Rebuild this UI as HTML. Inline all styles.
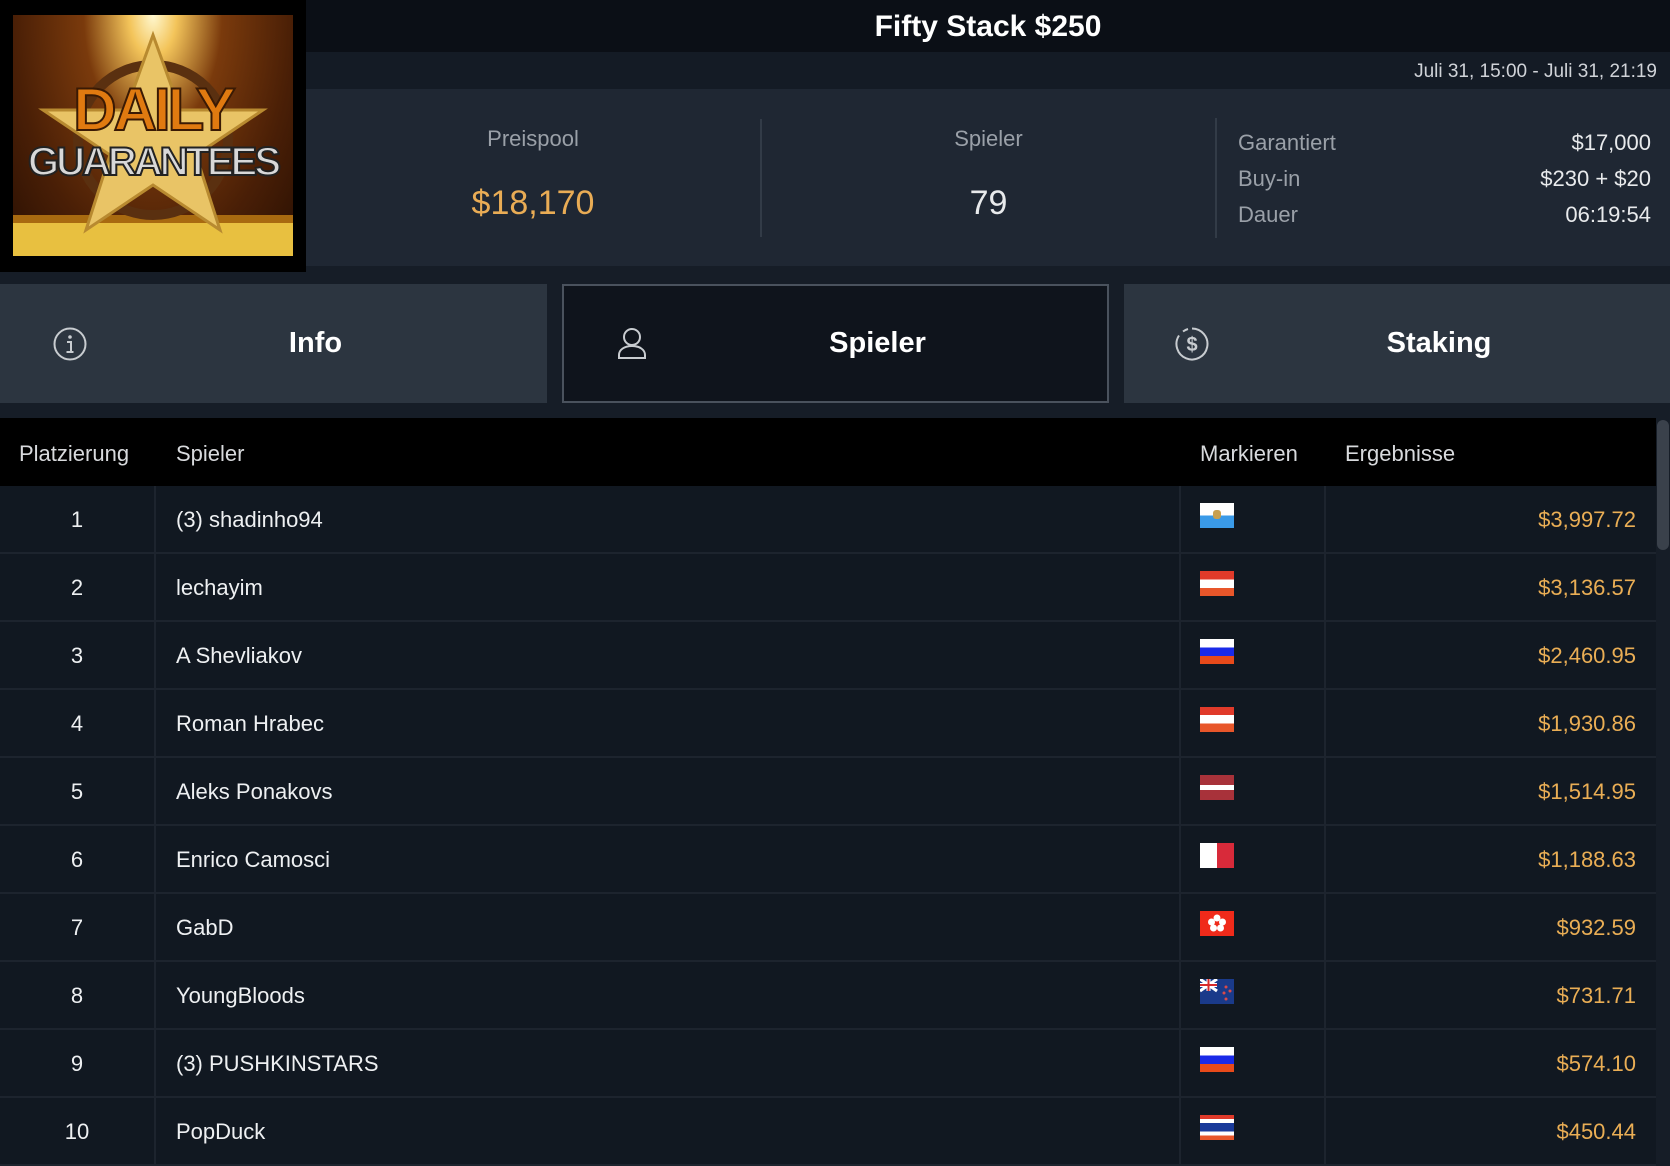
<!DOCTYPE html>
<html><head><meta charset="utf-8">
<style>
*{margin:0;padding:0;box-sizing:border-box}
body{width:1670px;height:1160px;overflow:hidden;background:#161d27;font-family:"Liberation Sans",sans-serif;color:#fff;position:relative}
.abs{position:absolute}
.title{left:306px;top:0;width:1364px;height:52px;background:#0b0f16;text-align:center;font-size:30px;line-height:54px;color:#fff;font-weight:bold}
.tbar{left:0;top:0;width:1670px;height:52px;background:#0b0f16}
.date{left:0;top:52px;width:1670px;height:37px;background:#141b25;text-align:right;padding-right:13px;font-size:19px;line-height:40px;color:#d0d3d8}
.stats{left:0;top:89px;width:1670px;height:177px;background:#1f2733}
.logo{left:0;top:0;width:306px;height:272px;background:#000}
.logoimg{left:13px;top:15px;width:280px;height:241px;overflow:hidden;background:radial-gradient(ellipse at 50% 0%,#fff8d0 0%,#f3c45a 12%,#7a3a0c 35%,#4a1f06 70%,#2a1003 100%)}
.lbl{color:#9aa0a8;font-size:22px}
.tab{top:284px;height:119px;background:#2c3540;font-size:29px;line-height:119px;text-align:center;font-weight:bold;padding-left:84px}
.thead{left:0;top:418px;width:1656px;height:68px;background:#000;font-size:22px;color:#d8dadd}
.row{left:0;width:1656px;height:68px;background:#111821;border-bottom:2px solid #1d242e;font-size:22px;color:#eef0f2}
.row .vl{position:absolute;top:0;width:2px;height:68px;background:#1d242e}
.money{color:#eaae55;position:absolute;right:20px;top:0;line-height:68px}
.flag{position:absolute;left:1200px;top:17px;width:34px;height:25px;overflow:hidden}
</style></head><body>
<div class="abs tbar"></div>
<div class="abs title">Fifty Stack $250</div>
<div class="abs date">Juli 31, 15:00 - Juli 31, 21:19</div>
<div class="abs stats">
  <div class="abs" style="left:306px;top:30px;width:454px;text-align:center"><div class="lbl" style="line-height:40px">Preispool</div><div style="color:#e9ac55;font-size:34px;line-height:68px;margin-top:10px">$18,170</div></div>
  <div class="abs" style="left:760px;top:30px;width:2px;height:118px;background:#323b47"></div>
  <div class="abs" style="left:762px;top:30px;width:453px;text-align:center"><div class="lbl" style="line-height:40px">Spieler</div><div style="color:#e8eaec;font-size:34px;line-height:68px;margin-top:10px">79</div></div>
  <div class="abs" style="left:1215px;top:29px;width:2px;height:120px;background:#323b47"></div>
  <div class="abs lbl" style="left:1238px;top:36px;line-height:36px">Garantiert<br>Buy-in<br>Dauer</div>
  <div class="abs" style="right:19px;top:36px;line-height:36px;text-align:right;font-size:22px;color:#e8eaec">$17,000<br>$230 + $20<br>06:19:54</div>
</div>
<div class="abs logo"><div class="abs logoimg">
  <svg width="280" height="241" viewBox="0 0 280 241" class="abs" style="left:0;top:0">
    <rect x="0" y="205" width="280" height="36" fill="#e8c040"/>
    <rect x="0" y="200" width="280" height="8" fill="#a86a10"/>
    <circle cx="140" cy="125" r="75" fill="none" stroke="#5a3010" stroke-width="10"/>
    <polygon points="140,20 167,95 250,95 183,140 207,215 140,170 73,215 97,140 30,95 113,95" fill="#e9c466" stroke="#b88a30" stroke-width="3"/>
  </svg>
  <div class="abs" style="left:0;width:280px;top:60px;text-align:center;font-size:60px;font-weight:bold;color:#e07a10;-webkit-text-stroke:2px #3a1a04;letter-spacing:-3px">DAILY</div>
  <div class="abs" style="left:0;width:280px;top:125px;text-align:center;font-size:40px;font-weight:bold;color:#d8d8d8;-webkit-text-stroke:2px #222;letter-spacing:-3px">GUARANTEES</div>
</div></div>

<div class="abs tab" style="left:0;width:547px">Info
  <svg class="abs" style="left:52px;top:42px" width="36" height="36" viewBox="0 0 36 36"><circle cx="18" cy="18" r="15.5" fill="none" stroke="#c8ccd0" stroke-width="2"/><circle cx="18" cy="11" r="1.8" fill="#c8ccd0"/><path d="M15 16h4v10M14.5 26h7" fill="none" stroke="#c8ccd0" stroke-width="2"/></svg>
</div>
<div class="abs tab" style="left:562px;width:547px;background:#0f141c;border:2px solid #4a525d;line-height:115px">Spieler
  <svg class="abs" style="left:52px;top:40px" width="32" height="36" viewBox="0 0 32 36"><circle cx="16" cy="11" r="8" fill="none" stroke="#c8ccd0" stroke-width="2"/><path d="M3 32v-3c0-5 5-9 13-9s13 4 13 9v3z" fill="none" stroke="#c8ccd0" stroke-width="2"/></svg>
</div>
<div class="abs tab" style="left:1124px;width:546px">Staking
  <svg class="abs" style="left:50px;top:42px" width="36" height="36" viewBox="0 0 36 36"><path d="M18 2.5A15.5 15.5 0 1 1 5 9.5" fill="none" stroke="#c8ccd0" stroke-width="2"/><path d="M9 5.5A15.5 15.5 0 0 1 14 3" fill="none" stroke="#c8ccd0" stroke-width="2"/><text x="18" y="25" text-anchor="middle" font-family="Liberation Sans" font-size="20" font-weight="bold" fill="#c8ccd0">$</text></svg>
</div>

<div class="abs" style="left:1656px;top:418px;width:14px;height:742px;background:#161d27"><div style="margin:2px 1px;height:130px;background:#3a414b;border-radius:6px"></div></div>
<div class="abs thead">
  <span class="abs" style="left:19px;line-height:72px">Platzierung</span>
  <span class="abs" style="left:176px;line-height:72px">Spieler</span>
  <span class="abs" style="left:1200px;line-height:72px">Markieren</span>
  <span class="abs" style="left:1345px;line-height:72px">Ergebnisse</span>
</div>

<div class="abs row" style="top:486px"><div class="vl" style="left:154px"></div><div class="vl" style="left:1179px"></div><div class="vl" style="left:1324px"></div><span class="abs" style="left:0;width:154px;text-align:center;line-height:68px">1</span><span class="abs" style="left:176px;line-height:68px">(3) shadinho94</span><div class="flag" style="background:linear-gradient(#fff 50%,#3a9ae8 50%)"><div style="position:absolute;left:13px;top:7px;width:8px;height:9px;background:#c8a050;border-radius:3px"></div></div><span class="money">$3,997.72</span></div>
<div class="abs row" style="top:554px"><div class="vl" style="left:154px"></div><div class="vl" style="left:1179px"></div><div class="vl" style="left:1324px"></div><span class="abs" style="left:0;width:154px;text-align:center;line-height:68px">2</span><span class="abs" style="left:176px;line-height:68px">lechayim</span><div class="flag" style="background:linear-gradient(#e03a2a 33%,#fff 33%,#fff 67%,#e8562a 67%)"></div><span class="money">$3,136.57</span></div>
<div class="abs row" style="top:622px"><div class="vl" style="left:154px"></div><div class="vl" style="left:1179px"></div><div class="vl" style="left:1324px"></div><span class="abs" style="left:0;width:154px;text-align:center;line-height:68px">3</span><span class="abs" style="left:176px;line-height:68px">A Shevliakov</span><div class="flag" style="background:linear-gradient(#fff 33%,#1a2ae8 33%,#1a2ae8 67%,#e84a1a 67%)"></div><span class="money">$2,460.95</span></div>
<div class="abs row" style="top:690px"><div class="vl" style="left:154px"></div><div class="vl" style="left:1179px"></div><div class="vl" style="left:1324px"></div><span class="abs" style="left:0;width:154px;text-align:center;line-height:68px">4</span><span class="abs" style="left:176px;line-height:68px">Roman Hrabec</span><div class="flag" style="background:linear-gradient(#e03a2a 33%,#fff 33%,#fff 67%,#e8562a 67%)"></div><span class="money">$1,930.86</span></div>
<div class="abs row" style="top:758px"><div class="vl" style="left:154px"></div><div class="vl" style="left:1179px"></div><div class="vl" style="left:1324px"></div><span class="abs" style="left:0;width:154px;text-align:center;line-height:68px">5</span><span class="abs" style="left:176px;line-height:68px">Aleks Ponakovs</span><div class="flag" style="background:linear-gradient(#a8323a 40%,#fff 40%,#fff 60%,#a8323a 60%)"></div><span class="money">$1,514.95</span></div>
<div class="abs row" style="top:826px"><div class="vl" style="left:154px"></div><div class="vl" style="left:1179px"></div><div class="vl" style="left:1324px"></div><span class="abs" style="left:0;width:154px;text-align:center;line-height:68px">6</span><span class="abs" style="left:176px;line-height:68px">Enrico Camosci</span><div class="flag" style="background:linear-gradient(90deg,#fff 50%,#d82a3a 50%)"></div><span class="money">$1,188.63</span></div>
<div class="abs row" style="top:894px"><div class="vl" style="left:154px"></div><div class="vl" style="left:1179px"></div><div class="vl" style="left:1324px"></div><span class="abs" style="left:0;width:154px;text-align:center;line-height:68px">7</span><span class="abs" style="left:176px;line-height:68px">GabD</span><div class="flag" style="background:#f02a1a"><svg width="34" height="25" viewBox="0 0 34 25"><g fill="#fff"><circle cx="17" cy="7" r="3.5"/><circle cx="11.5" cy="11" r="3.5"/><circle cx="22.5" cy="11" r="3.5"/><circle cx="13.5" cy="17" r="3.5"/><circle cx="20.5" cy="17" r="3.5"/></g></svg></div><span class="money">$932.59</span></div>
<div class="abs row" style="top:962px"><div class="vl" style="left:154px"></div><div class="vl" style="left:1179px"></div><div class="vl" style="left:1324px"></div><span class="abs" style="left:0;width:154px;text-align:center;line-height:68px">8</span><span class="abs" style="left:176px;line-height:68px">YoungBloods</span><div class="flag" style="background:#1a3a8a"><svg width="34" height="25" viewBox="0 0 34 25"><path d="M0 0L17 12M17 0L0 12" stroke="#fff" stroke-width="3"/><path d="M8.5 0v12M0 6h17" stroke="#fff" stroke-width="4"/><path d="M8.5 0v12M0 6h17" stroke="#d82a2a" stroke-width="2"/><g fill="#d84a4a"><circle cx="26" cy="8" r="1.5"/><circle cx="30" cy="12" r="1.5"/><circle cx="24" cy="14" r="1.5"/><circle cx="26" cy="20" r="1.5"/></g></svg></div><span class="money">$731.71</span></div>
<div class="abs row" style="top:1030px"><div class="vl" style="left:154px"></div><div class="vl" style="left:1179px"></div><div class="vl" style="left:1324px"></div><span class="abs" style="left:0;width:154px;text-align:center;line-height:68px">9</span><span class="abs" style="left:176px;line-height:68px">(3) PUSHKINSTARS</span><div class="flag" style="background:linear-gradient(#fff 33%,#1a2ae8 33%,#1a2ae8 67%,#e84a1a 67%)"></div><span class="money">$574.10</span></div>
<div class="abs row" style="top:1098px"><div class="vl" style="left:154px"></div><div class="vl" style="left:1179px"></div><div class="vl" style="left:1324px"></div><span class="abs" style="left:0;width:154px;text-align:center;line-height:68px">10</span><span class="abs" style="left:176px;line-height:68px">PopDuck</span><div class="flag" style="background:linear-gradient(#e03a2a 17%,#fff 17%,#fff 33%,#1a3a9a 33%,#1a3a9a 67%,#fff 67%,#fff 83%,#e8562a 83%)"></div><span class="money">$450.44</span></div>
</body></html>
